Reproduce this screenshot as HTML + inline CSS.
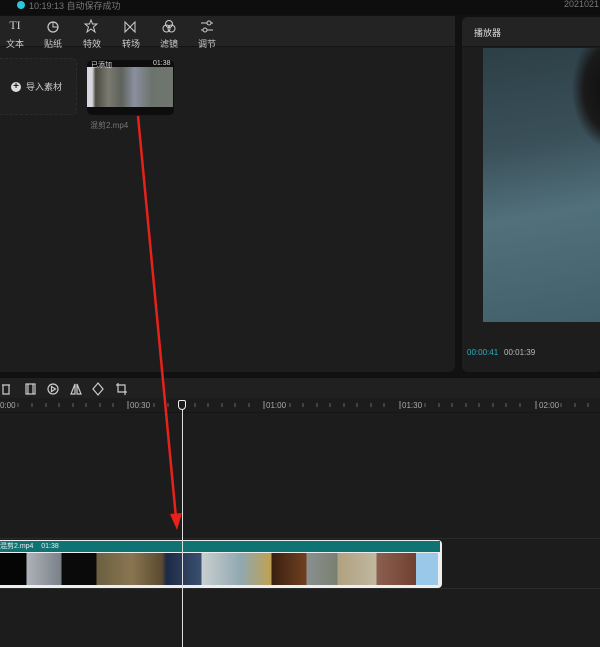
<!DOCTYPE html>
<html><head><meta charset="utf-8"><style>
*{margin:0;padding:0;box-sizing:border-box}
body{width:600px;height:647px;background:#111;position:relative;overflow:hidden;font-family:"Liberation Sans","Noto Sans CJK SC",sans-serif;color:#ccc}
.abs{position:absolute}
.tb{font-size:9px;color:#ccc;text-align:center;width:30px}
</style></head><body>
<div class="abs" style="left:0;top:0;width:600px;height:15px;background:#0e0e0e"></div>
<div class="abs" style="left:17px;top:1px;width:8px;height:8px;border-radius:50%;background:#2ec6d6"></div>
<div class="abs" style="left:29px;top:-1px;font-size:9px;color:#777">10:19:13 自动保存成功</div>
<div class="abs" style="left:564px;top:-1px;font-size:9px;color:#777">2021021</div>
<div class="abs" style="left:0;top:16px;width:455px;height:356px;background:#1d1d1e;border-radius:0 6px 6px 0"></div>
<div class="abs" style="left:0;top:16px;width:455px;height:31px;background:#232324;border-bottom:1px solid #151515"></div>
<div class="abs tb" style="left:0;top:18px;font-size:12px;font-family:'Liberation Serif',serif">TI</div>
<div class="abs tb" style="left:0;top:37px">文本</div>
<svg class="abs" style="left:46px;top:20px" width="14" height="14"><circle cx="7" cy="7" r="5" fill="none" stroke="#ccc" stroke-width="1.2"/><path d="M7 2 L7 7 L12 7" stroke="#ccc" fill="none"/></svg>
<div class="abs tb" style="left:38px;top:37px">贴纸</div>
<svg class="abs" style="left:84px;top:19px" width="14" height="14"><path d="M7 1 L8.5 5 L13 5 L9.5 8 L11 13 L7 10 L3 13 L4.5 8 L1 5 L5.5 5Z" fill="none" stroke="#ccc"/></svg>
<div class="abs tb" style="left:77px;top:37px">特效</div>
<svg class="abs" style="left:123px;top:20px" width="14" height="14"><path d="M2 2 L12 12 L12 2 L2 12Z" fill="none" stroke="#ccc"/></svg>
<div class="abs tb" style="left:116px;top:37px">转场</div>
<svg class="abs" style="left:162px;top:19px" width="14" height="14"><circle cx="7" cy="5" r="3.5" fill="none" stroke="#ccc"/><circle cx="4.5" cy="9.5" r="3.5" fill="none" stroke="#ccc"/><circle cx="9.5" cy="9.5" r="3.5" fill="none" stroke="#ccc"/></svg>
<div class="abs tb" style="left:154px;top:37px">滤镜</div>
<svg class="abs" style="left:200px;top:20px" width="14" height="14"><path d="M1 3H13M1 10H13" stroke="#ccc"/><circle cx="9" cy="3" r="2" fill="#232324" stroke="#ccc"/><circle cx="5" cy="10" r="2" fill="#232324" stroke="#ccc"/></svg>
<div class="abs tb" style="left:192px;top:37px">调节</div>
<div class="abs" style="left:-5px;top:58px;width:82px;height:57px;border:1px dashed #2c2c2c;border-radius:5px;background:#202021"></div>
<div class="abs" style="left:11px;top:82px;width:10px;height:10px;border-radius:50%;background:#ddd;color:#222;font-size:10px;line-height:10px;text-align:center;font-weight:bold">+</div>
<div class="abs" style="left:26px;top:80px;font-size:9px;color:#ccc">导入素材</div>
<div class="abs" style="left:87px;top:60px;width:87px;height:55px;background:#0d0d0d;border-radius:5px"></div>
<div class="abs" style="left:87px;top:67px;width:86px;height:40px;background:linear-gradient(90deg,#d7d7e0 0,#d7d7e0 6%,#4a4a40 10%,#7a7a70 25%,#5d625c 40%,#8a90a0 55%,#6d746e 75%,#6f7670 100%)"></div>
<div class="abs" style="left:91px;top:60px;font-size:7px;color:#ddd">已添加</div>
<div class="abs" style="left:153px;top:60px;font-size:7px;color:#ddd">01:38</div>
<div class="abs" style="left:90px;top:120px;font-size:8px;color:#777">混剪2.mp4</div>
<div class="abs" style="left:462px;top:17px;width:140px;height:355px;background:#1d1d1e;border-radius:6px"></div>
<div class="abs" style="left:462px;top:17px;width:140px;height:30px;background:#232324;border-bottom:1px solid #151515;border-radius:6px 0 0 0"></div>
<div class="abs" style="left:474px;top:26px;font-size:9px;color:#ddd">播放器</div>
<div class="abs" style="left:483px;top:48px;width:117px;height:274px;background:radial-gradient(ellipse 40px 60px at 110% 15%,#0d0d0d 0,#1a1a1a 70%,transparent 100%),linear-gradient(170deg,#2c3f47 0,#3a5059 35%,#51707b 60%,#42606a 100%)"></div>
<div class="abs" style="left:467px;top:348px;font-size:8px;color:#2ab0c0">00:00:41</div>
<div class="abs" style="left:504px;top:348px;font-size:8px;color:#bbb">00:01:39</div>
<div class="abs" style="left:0;top:378px;width:600px;height:269px;background:#1c1c1d"></div>
<div class="abs" style="left:0;top:378px;width:600px;height:20px;background:#202021"></div>
<svg class="abs" style="left:0;top:381px" width="135" height="16" fill="none" stroke="#ccc" stroke-width="1.2">
<path d="M2 4H10M3 4V13H9V4"/><rect x="26" y="3" width="9" height="10"/><path d="M28 3V13M33 3V13"/>
<circle cx="53" cy="8" r="5"/><path d="M51.5 5.5L55.5 8L51.5 10.5Z"/>
<path d="M75 3L71 13H75ZM77 3L81 13H77Z"/><path d="M98 2L103 8L98 14L93 8Z"/><path d="M118 2V11H127M116 4H125V14"/></svg>
<svg class="abs" style="left:0;top:398px" width="600" height="14">
<g stroke="#666" stroke-width="1">
<path d="M18 5V9M32 5V9M46 5V9M59 5V9M73 5V9M86 5V9M100 5V9M113 5V9M154 5V9M168 5V9M195 5V9M208 5V9M222 5V9M235 5V9M249 5V9M290 5V9M303 5V9M317 5V9M330 5V9M344 5V9M357 5V9M371 5V9M384 5V9M425 5V9M439 5V9M452 5V9M466 5V9M479 5V9M493 5V9M506 5V9M520 5V9M561 5V9M575 5V9M588 5V9"/>
<path d="M128 3V11M264 3V11M400 3V11M536 3V11" stroke="#999"/></g>
<g fill="#aaa" font-size="8" font-family="Liberation Sans"><text x="0" y="10">0:00</text><text x="130" y="10">00:30</text><text x="266" y="10">01:00</text><text x="402" y="10">01:30</text><text x="539" y="10">02:00</text></g></svg>
<div class="abs" style="left:0;top:412px;width:600px;height:1px;background:#151515"></div>
<div class="abs" style="left:0;top:538px;width:600px;height:1px;background:#2a2a2a"></div>
<div class="abs" style="left:0;top:588px;width:600px;height:1px;background:#2a2a2a"></div>
<div class="abs" style="left:0;top:540px;width:442px;height:48px;background:#eee;border-radius:0 4px 4px 0"></div>
<div class="abs" style="left:0;top:541px;width:440px;height:11px;background:#0f7374"></div>
<div class="abs" style="left:0;top:541px;font-size:7px;color:#eee;line-height:11px">混剪2.mp4 &nbsp;&nbsp; 01:38</div>
<div class="abs" style="left:0;top:553px;width:438px;height:32px;background:linear-gradient(90deg,#050505 0,#050505 6%,#aeb3ba 6%,#7a8088 14%,#0a0a0a 14%,#0a0a0a 22%,#6a5f40 22%,#8a7550 30%,#5a4a30 37%,#1c2a45 38%,#3a5070 46%,#c9cfd0 46%,#90a8b0 55%,#c0a050 62%,#3a2010 62%,#704020 70%,#8a9090 70%,#7a8070 77%,#b0a080 77%,#c0b8a0 86%,#8a6050 86%,#704030 95%,#9ac8e8 95%)"></div>
<div class="abs" style="left:182px;top:406px;width:1px;height:241px;background:#ddd"></div>
<div class="abs" style="left:178px;top:400px;width:8px;height:10px;border:1.5px solid #eee;border-radius:2px 2px 4px 4px;background:#1c1c1d"></div>
<svg class="abs" style="left:0;top:0" width="600" height="647"><path d="M138 116 L176 518" stroke="#e6221b" stroke-width="2.5"/><path d="M170 514 L177 530 L182 513Z" fill="#e6221b"/></svg>
</body></html>
